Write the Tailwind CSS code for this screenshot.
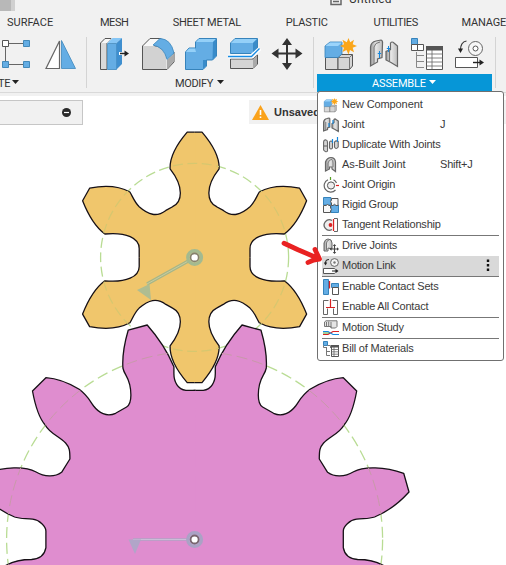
<!DOCTYPE html>
<html lang="en">
<head>
<meta charset="utf-8">
<title>Assemble</title>
<script src="https://cdn.jsdelivr.net/npm/@tailwindcss/browser@4"></script>
</head>
<body class="relative w-[506px] h-[565px] overflow-hidden bg-white font-[Roboto,sans-serif] text-[11px] text-[#333]">

<!-- shared icon symbols -->
<svg class="absolute w-0 h-0" aria-hidden="true">
  <defs>
    <linearGradient id="gr"><stop offset="0" stop-color="#9a9a9a"/><stop offset=".45" stop-color="#e6e6e6"/><stop offset="1" stop-color="#bdbdbd"/></linearGradient>
    <symbol id="i-new" viewBox="324 36 33 36">
      <path d="M325.500 57.500H338V69.500H325.500Z" fill="#d9d9d9" stroke="#555"/>
      <path d="M338 57.500L341 54.500H352.500V66L349.500 69.500H338Z" fill="#d5d5d5" stroke="#555"/>
      <path d="M338 57.500H349.500V69.500M349.500 57.500L352.500 54.500" fill="none" stroke="#777"/>
      <path d="M325 46L330 42H342V54L338 57.500H325Z" fill="#64ade4" stroke="#3683bb" stroke-width=".8"/>
      <path d="M325.500 46L330 42.400H342L338 46Z" fill="#9bd4fb"/>
      <path d="M348.500 38L350.200 42.300L354 39.700L352.700 44.200L357 46L352.700 47.800L354 52.200L350 50L348.500 54.500L346.500 50L342.500 52L344 47.800L340 46L344 44.200L342.500 39.700L346.800 42.300Z" fill="#faa61a"/>
    </symbol>
    <symbol id="i-joint" viewBox="368 37 32 34">
      <path d="M370.500 66V47Q371 42 376 41L381 40Q383 40.500 382.500 44L382 57.500L377.500 59V62Z" fill="url(#gr)" stroke="#666" stroke-width="1.200"/>
      <path d="M374 64V47Q375 42.500 380 42" fill="none" stroke="#777"/>
      <path d="M386 60V51.500L390.500 49.500V43Q392 41 394 43L397.500 46V66.500L391 62.500Z" fill="url(#gr)" stroke="#666" stroke-width="1.200"/>
      <path d="M389.500 50V61" fill="none" stroke="#777"/>
      <path d="M379.500 51V58M388.500 46V52" stroke="#1688dd"/><path d="M377.800 53.500H381.200M386.800 48.500H390.200" stroke="#1688dd"/>
    </symbol>
    <symbol id="i-bom" viewBox="410 37 34 34">
      <path d="M411.500 38.500H417.500V44.500H411.500Z" fill="#64ade4" stroke="#3683bb"/>
      <path d="M411.500 44.500H417.500V50.500H411.500ZM417.500 44.500H423.500V50.500H417.500Z" fill="#fff" stroke="#555"/>
      <path d="M416.500 52V67.500H424M416.500 55.500H424M416.500 61.500H424" fill="none" stroke="#888"/>
      <path d="M426.500 46.500H442.500V69.500H426.500Z" fill="#fff" stroke="#555"/><path d="M426 46H443V50.500H426Z" fill="#555"/>
      <path d="M426 54H443M426 58H443M426 62H443M426 66H443M432 50V69" stroke="#666" stroke-width=".8"/>
    </symbol>
    <symbol id="i-link" viewBox="454 38 32 32">
      <circle cx="475.500" cy="48.500" r="7" fill="#f7f7f7" stroke="#666"/><circle cx="475.500" cy="48.500" r="2.500" fill="#fff" stroke="#555"/>
      <path d="M466.500 41Q460.500 42 460.500 50" fill="none" stroke="#333" stroke-width="1.200"/><path d="M458 48.500H463L460.500 53Z" fill="#222"/>
      <path d="M455.500 57.500H477.500V67.500H455.500Z" fill="#fff" stroke="#555"/><path d="M473 62.500H481" stroke="#222" stroke-width="1.400"/><path d="M479.500 59.500V65.500L484 62.500Z" fill="#222"/>
    </symbol>
    <path id="yq" d="M-1 1V-125.200H7.400C17 -114 25 -100 24.500 -88.500C10 -70 12.500 -55.500 22 -50.700L28.700 -47C38 -40 46 -42.500 55.400 -50.700C60 -55 62 -61 64.700 -65.400C76 -71.500 91 -72 105 -69.200L112 -56.700C107 -44 100 -31 89.700 -23.400C68 -25.500 55.400 -19 55.400 -9V1Z"/>
    <path id="pf" d="M-1 30V-149.200H8.700C17 -150 20.700 -158 20.700 -166V-172.800C28 -190 39 -205 47.400 -214.500L66.400 -209.300C70 -197 72.500 -184 71.700 -171.500C70 -163 63.700 -162 63.700 -144.500C63.700 -137 65.500 -134 68 -132.500L79 -126.200C88 -122 96 -127 101 -133.500C105 -139 107 -144 115.400 -150.200C125 -156 137 -161 148.700 -161.800L162.100 -148.500C160 -137 156 -122 149.400 -114.500C145 -106 135 -103 129 -96.500C125 -92 124.700 -89 124.700 -80.500L133 -67.200C140 -62 150 -62.500 159 -67.800C169 -73.500 190 -73 209.100 -66.200L214.400 -47.500C204 -36 191 -27 180 -22.500C174 -20.500 169 -21.200 162 -20.300C155 -19.500 148.700 -13 148.700 -8.500V8.200C150 16 156 19.500 163 20C173 20 180 21 188 25.500L196 30Z"/>
    <clipPath id="cy"><use href="#yq"/><use href="#yq" transform="scale(-1 1)"/><use href="#yq" transform="scale(1 -1)"/><use href="#yq" transform="scale(-1 -1)"/></clipPath>
    <clipPath id="cp"><use href="#pf"/><use href="#pf" transform="scale(-1 1)"/></clipPath>
  </defs>
</svg>

<!-- modelling canvas -->
<svg class="absolute inset-0" width="506" height="565" viewBox="0 0 506 565">
  <g fill="none" stroke="#b9dc94" stroke-width="1.300">
    <circle cx="194.600" cy="257.400" r="94" stroke-dasharray="10 4.500"/><circle cx="194.600" cy="539.500" r="188" stroke-dasharray="11 5"/>
  </g>
  <g transform="translate(194.600 539.500)">
    <g id="ph">
      <use href="#pf" fill="#df8dcf"/>
      <path fill="none" stroke="#161016" stroke-width="1.300" stroke-linejoin="round" d="M-1 -149.200H8.700C17 -150 20.700 -158 20.700 -166V-172.800C28 -190 39 -205 47.400 -214.500L66.400 -209.300C70 -197 72.500 -184 71.700 -171.500C70 -163 63.700 -162 63.700 -144.500C63.700 -137 65.500 -134 68 -132.500L79 -126.200C88 -122 96 -127 101 -133.500C105 -139 107 -144 115.400 -150.200C125 -156 137 -161 148.700 -161.800L162.100 -148.500C160 -137 156 -122 149.400 -114.500C145 -106 135 -103 129 -96.500C125 -92 124.700 -89 124.700 -80.500L133 -67.200C140 -62 150 -62.500 159 -67.800C169 -73.500 190 -73 209.100 -66.200L214.400 -47.500C204 -36 191 -27 180 -22.500C174 -20.500 169 -21.200 162 -20.300C155 -19.500 148.700 -13 148.700 -8.500V8.200C150 16 156 19.500 163 20C173 20 180 21 188 25.500L196 30"/>
    </g>
    <use href="#ph" transform="scale(-1 1)"/>
    <g clip-path="url(#cp)"><circle r="188" fill="none" stroke="#c799a9" stroke-dasharray="11 5"/></g>
  </g>
  <g transform="translate(194.600 257.400)">
    <g fill="#f0c66c"><use href="#yq"/><use href="#yq" transform="scale(-1 1)"/><use href="#yq" transform="scale(1 -1)"/><use href="#yq" transform="scale(-1 -1)"/></g>
    <path id="ys" fill="none" stroke="#161016" stroke-width="1.300" stroke-linejoin="round" d="M0 -125.200H7.400C17 -114 25 -100 24.500 -88.500C10 -70 12.500 -55.500 22 -50.700L28.700 -47C38 -40 46 -42.500 55.400 -50.700C60 -55 62 -61 64.700 -65.400C76 -71.500 91 -72 105 -69.200L112 -56.700C107 -44 100 -31 89.700 -23.400C68 -25.500 55.400 -19 55.400 -9V0"/>
    <use href="#ys" transform="scale(-1 1)"/><use href="#ys" transform="scale(1 -1)"/><use href="#ys" transform="scale(-1 -1)"/>
    <g clip-path="url(#cy)"><circle r="94" fill="none" stroke="#d6c76f" stroke-width="1.200" stroke-dasharray="10 4.500"/></g>
  </g>
  <!-- joint markers -->
  <path d="M191 259.500L147 284" stroke="#a7b687" stroke-width="3.200"/><path d="M191 259.500L147 284" stroke="#d0d2a4" stroke-width=".8"/>
  <path d="M137 290L149.500 284L151 300Z" fill="#afbd91"/>
  <circle cx="194.600" cy="257.400" r="7" fill="#b7bd8d" stroke="#a3ba90" stroke-width="3"/><circle cx="194.600" cy="257.400" r="4" fill="#fff" stroke="#85816c" stroke-width="1.600"/>
  <path d="M133 539.500H188" stroke="#b1a5c5" stroke-width="2.400"/><path d="M133 539.500H188" stroke="#cec1da" stroke-width=".9"/>
  <path d="M128.500 539.500H141L135 554Z" fill="#b1a5c8"/>
  <circle cx="194.600" cy="539.500" r="7" fill="#b8a7cc" stroke="#aaa2c5" stroke-width="3"/><circle cx="194.600" cy="539.500" r="4" fill="#fff" stroke="#79656f" stroke-width="1.800"/>
</svg>

<div class="relative flex flex-col">
  <!-- document tab strip -->
  <header class="h-[11px] bg-[#f1f1f1] flex">
    <div class="w-[11px] bg-[#b8b8b8]"></div><div class="w-1 bg-[#d0d0d0]"></div>
    <svg class="ml-[314px] shrink-0" width="14" height="11"><path d="M2 -5V4.500H12V-5M4 1.500H10" fill="none" stroke="#666" stroke-width="1.500"/></svg>
    <span class="ml-[6px] -mt-[9px] text-[12px] leading-[16px] tracking-[.2px]">Untitled</span>
  </header>
  <!-- workspace tabs -->
  <nav class="h-[23px] bg-[#f1f1f1] flex pt-px leading-[22px] whitespace-nowrap">
    <span class="ml-[7px] w-[93px]">SURFACE</span><span class="w-[73px] tracking-[-.4px]">MESH</span><span class="w-[113px] tracking-[-.3px]">SHEET METAL</span><span class="w-[88px] tracking-[-.2px]">PLASTIC</span><span class="w-[88px] tracking-[-.4px]">UTILITIES</span><span class="tracking-[-.2px]">MANAGE</span>
  </nav>
  <!-- tool ribbon -->
  <section class="h-[59px] bg-[#f1f1f1] flex border-b border-[#d9d9d9]">
    <div class="w-[86px] flex flex-col">
      <div class="h-10 flex shrink-0">
        <svg width="39" height="40" viewBox="0 34 39 40"><path d="M9 43.500H24M5.500 47V61M9 64.500H24" stroke="#666"/><path d="M2.500 40.500H8.500V46.500H2.500Z" fill="#fff" stroke="#555"/><path d="M23.500 40.500H29.500V46.500H23.500ZM2.500 61.500H8.500V67.500H2.500ZM23.500 61.500H29.500V67.500H23.500Z" fill="#64ade4" stroke="#4389b9"/></svg>
        <svg width="43" height="40" viewBox="39 34 43 40"><path d="M59.500 41V68.500H46Z" fill="#fff" stroke="#666" stroke-width="1.200"/><path d="M61.500 40.500V68.500H75.500Z" fill="#64ade4" stroke="#3e88bd" stroke-width=".8"/></svg>
      </div>
      <div class="flex items-center h-[18px] pt-px leading-[17px]"><span class="-ml-[2px] tracking-[-.3px]">TE</span><svg class="ml-[2px] -mt-[3px]" width="7" height="5"><path d="M0 0H7L3.500 4Z" fill="#222"/></svg></div>
    </div>
    <div class="w-px h-[51px] mt-[3px] bg-[#d4d4d4]"></div>
    <div class="w-[226px] pl-[6px] flex flex-col">
      <div class="h-10 flex shrink-0">
        <svg width="43" height="40" viewBox="93 34 43 40"><path d="M100.500 69.500V43L105 38.500H111L107 43V69.500Z" fill="#d9d9d9" stroke="#555"/><path d="M101.500 43L105.500 39H111L107 43Z" fill="#f8f8f8"/><path d="M107 43V70L112 65V39Z" fill="#fff"/><path d="M107.500 43.500H116.500V69.500H107.500Z" fill="#64ade4" stroke="#3e88bd" stroke-width=".8"/><path d="M107.500 43L112.500 38H122L116.500 43Z" fill="#86c6f5"/><path d="M116.500 43L122 38V64L116.500 69.500Z" fill="#3f8fcf"/><path d="M119 53.500H128" stroke="#fff" stroke-width="3"/><path d="M120 53.500H127" stroke="#222" stroke-width="1.500"/><path d="M124.500 50.500L129 53.500L124.500 56.500Z" fill="#222"/></svg>
        <svg width="43" height="40" viewBox="136 34 43 40"><path d="M142.500 69.500V46L150 38.500H161L154 46Q166 48 167 58L174 52V62L167 69.500Z" fill="#f8f8f8" stroke="#555"/><path d="M143 46H153Q165 47 166.500 60V69H143Z" fill="#d2d2d2"/><path d="M167 60L173.500 54V62L167 69Z" fill="#aaa"/><path d="M153 45L160 38.500Q171 39 174 53L167 59.500Q164 47 153 45Z" fill="#64ade4" stroke="#3e88bd" stroke-width=".8"/></svg>
        <svg width="43" height="40" viewBox="179 34 43 40"><path d="M185.500 52L189 48H195.500V42L199 38.500H216.500V56L212.500 60H206.500V66L203 69.500H185.500Z" fill="#64ade4" stroke="#3683bb"/><path d="M186 52L189 48.500H195L196 52ZM196 42L199 39H216L213 42Z" fill="#94d0f8"/><path d="M213 42L216 39V56L212.500 60ZM203 60H206V66L203 69Z" fill="#398bc9"/></svg>
        <svg width="43" height="40" viewBox="222 34 43 40"><path d="M230.500 43L235 38.500H257.500V49L253 53.500H230.500Z" fill="#64ade4" stroke="#3683bb"/><path d="M231 43L235 39H257L253 43Z" fill="#94d0f8"/><path d="M253 43L257 39V49L253 53Z" fill="#398bc9"/><path d="M230.500 59H253L257.500 55V64L253 68.500H230.500Z" fill="#d5d5d5" stroke="#555"/><path d="M253 59L257 56V64L253 68Z" fill="#aaa"/><path d="M228 56.500H251L260 48.500" fill="none" stroke="#fff" stroke-width="4"/><path d="M228 56.500H251.500L259.500 48.500" fill="none" stroke="#168be3" stroke-width="1.300"/></svg>
        <svg width="43" height="40" viewBox="265 34 43 40"><path d="M275 53.500H299M287 42V65" stroke="#333" stroke-width="2"/><path d="M287 38L292 45H282ZM287 70L292 63H282ZM271.500 53.500L278.500 48.500V58.500ZM302.500 53.500L295.500 48.500V58.500Z" fill="#333"/></svg>
      </div>
      <div class="flex items-center h-[18px] pt-px leading-[17px] pl-[82px]"><span class="tracking-[-.35px]">MODIFY</span><svg class="ml-[4px] -mt-[3px]" width="7" height="5"><path d="M0 0H7L3.500 4Z" fill="#222"/></svg></div>
    </div>
    <div class="w-px h-[51px] mt-[3px] bg-[#d4d4d4]"></div>
    <div class="w-[178px] pl-[3px] flex flex-col">
      <div class="h-10 flex shrink-0">
        <svg width="43" height="40" viewBox="317 34 43 40"><use href="#i-new" x="324" y="36" width="33" height="36"/></svg>
        <svg width="43" height="40" viewBox="360 34 43 40"><use href="#i-joint" x="368" y="37" width="32" height="34"/></svg>
        <svg width="43" height="40" viewBox="403 34 43 40"><use href="#i-bom" x="410" y="37" width="34" height="34"/></svg>
        <svg width="43" height="40" viewBox="446 34 43 40"><use href="#i-link" x="454" y="38" width="32" height="32"/></svg>
      </div>
      <div class="h-[18px] w-[175px] bg-[#0696d7] text-white flex items-center pt-px leading-[17px] pl-[55px]"><span class="tracking-[-.15px]">ASSEMBLE</span><svg class="ml-[3px] -mt-[3px]" width="7" height="5"><path d="M0 0H7L3.500 4Z" fill="#fff"/></svg></div>
    </div>
    <div class="ml-[3px] w-px h-[51px] mt-[3px] bg-[#d4d4d4]"></div>
  </section>
  <!-- browser panel and document status -->
  <section class="flex justify-between border-t-[3px] border-[#f1f1f1] pt-1">
    <div class="w-[83px] h-[25px] bg-[#f1f1f1] border border-l-0 border-[#c6c6c6] flex items-center justify-end pr-[11px]"><svg width="9" height="9"><circle cx="4.500" cy="4.500" r="4.500" fill="#2b2b2b"/><path d="M2 4.500H7" stroke="#fff" stroke-width="1.200"/></svg></div>
    <div class="w-[257px] h-[24px] bg-[#f1f1f1] flex items-center pl-[3px]"><svg width="17" height="15"><path d="M8.500 0L17 15H0Z" fill="#faa21b"/><path d="M8.500 5V10M8.500 11.500V13" stroke="#fff" stroke-width="1.600"/></svg><b class="ml-[5px] font-['Liberation_Sans',sans-serif]">Unsaved:</b></div>
  </section>
</div>

<!-- ASSEMBLE drop-down -->
<div class="absolute left-[317px] top-[91px] w-[187px] h-[270px] bg-white border border-[#707070] rounded-[3px] pt-[3px] pl-1 pr-1 leading-[20px] font-['Liberation_Sans',sans-serif] tracking-[-.2px] text-[#3a3a3a] [&_span]:-mt-[2px]">
  <div class="h-5 pl-px flex items-center"><svg class="w-4 h-4 mr-[3px]"><use href="#i-new" width="16" height="16"/></svg><span class="tracking-[-.1px]">New Component</span></div>
  <div class="h-5 pl-px flex items-center"><svg class="w-4 h-4 mr-[3px]"><path d="M.6 14V5Q1 2 4 1.500L6 1Q7 1 6.800 3V10L4.500 11V12.500Z" fill="url(#gr)" stroke="#666" stroke-width="1.200"/><path d="M2.800 13V5" stroke="#777"/><path d="M9 11V6.500L11 5.500V2.500Q12 1.500 13 2.500L15.300 4V14.500L12 12.500Z" fill="url(#gr)" stroke="#666" stroke-width="1.200"/><path d="M6 6V10M10 3V7" stroke="#1688dd" stroke-width="1.200"/></svg><span class="w-[98px]">Joint</span><span>J</span></div>
  <div class="h-5 pl-px flex items-center"><svg class="w-4 h-4 mr-[3px]"><g fill="#d5d5d5" stroke="#666" stroke-width="1.100"><path d="M.6 13V5Q1 2.500 3 3Q4.500 3 4.500 6V14Q3 16 .6 13ZM6.500 5Q8 3 9.500 5V11Q8 13 6.500 11ZM11.500 5Q13 3 15.200 4.500V10Q13 13 11.500 10Z"/><path d="M.6 9H4.500"/></g><path d="M9.500 2V6M14.500 0V5" stroke="#1688dd" stroke-width="1.200"/></svg><span>Duplicate With Joints</span></div>
  <div class="h-5 pl-px flex items-center"><svg class="w-4 h-4 mr-[3px]"><path d="M2.500 14V5Q4 .7 8 .7Q12 .7 12.500 5V14.500L9 12V10H6.500V12Z" fill="url(#gr)" stroke="#666" stroke-width="1.200"/><path d="M5 12V6Q6 2 9 2.500Q10 3 10 6V10" fill="none" stroke="#777"/></svg><span class="w-[98px] tracking-[-.05px]">As-Built Joint</span><span>Shift+J</span></div>
  <div class="h-5 pl-px flex items-center"><svg class="w-4 h-4 mr-[3px]"><circle cx="8" cy="8.500" r="3.600" fill="#eee" stroke="#555"/><path d="M5 2.700A6.500 6.500 0 1 0 12.500 13M10.500 2.700A6 6 0 0 1 13.500 6" fill="none" stroke="#666" stroke-width="1.200"/><path d="M7.500 0V3" stroke="#55a022" stroke-width="1.200"/><path d="M13 8.500H16" stroke="#e02222" stroke-width="1.200"/></svg><span>Joint Origin</span></div>
  <div class="h-5 pl-px flex items-center"><svg class="w-4 h-4 mr-[3px]"><path d="M.5.500H8V8H.5Z" fill="#64ade4" stroke="#3683bb"/><path d="M8 8H15.500V15.500H8Z" fill="#64ade4" stroke="#3683bb"/><path d="M8.500 1.500H15V8.500H13Q11.500 6 10 8.500H8.500V6Q6.500 5 8.500 3ZM.5 8.500H3Q4.500 6.500 6 8.500H7.500V11Q9.500 12 7.500 14V15.500H.5Z" fill="#f8f8f8" stroke="#555"/></svg><span class="tracking-[-.25px]">Rigid Group</span></div>
  <div class="h-5 pl-px flex items-center"><svg class="w-4 h-4 mr-[3px]"><path d="M9 3.500A5.200 5.200 0 1 0 9 12.500" fill="#eee" stroke="#666" stroke-width="1.300"/><circle cx="7.500" cy="8" r="1.900" fill="#d92222"/><path d="M10.500 2V14" stroke="#d92222" stroke-width="1.300"/><path d="M11 1.500H14.500V14.500H11" fill="none" stroke="#666"/></svg><span>Tangent Relationship</span></div>
  <hr class="h-px border-0 bg-[#777]">
  <div class="h-5 pl-px flex items-center"><svg class="w-4 h-4 mr-[3px]"><path d="M1 13V5Q2 1 5 1Q9 1 9 5V11L5 10V13Z" fill="url(#gr)" stroke="#666"/><path d="M3.500 12V5Q4 2 6 2" fill="none" stroke="#777"/><path d="M7.500 11H15M11.500 7V15" stroke="#444" stroke-width="1.100"/><path d="M11.500 6L13.200 8H9.800ZM11.500 16L13.200 14H9.800ZM6.500 11L8.500 9.300V12.700ZM16 11L14 9.300V12.700Z" fill="#444"/></svg><span>Drive Joints</span></div>
  <div class="h-5 pl-px flex items-center bg-[#d9d9d9]"><svg class="w-4 h-4 mr-[3px]"><circle cx="11.500" cy="4.500" r="3.900" fill="#f4f4f4" stroke="#666"/><circle cx="11.500" cy="4.500" r="1.200" fill="#777"/><path d="M6 1.500Q2.500 1.500 2.500 5" fill="none" stroke="#333" stroke-width="1.100"/><path d="M.8 4.500H4.200L2.500 7.500Z" fill="#222"/><path d="M.5 10.500H11.500V15.500H.5Z" fill="#fff"/><path d="M11.500 11V10.500H.5V15.500H11.500V15" fill="none" stroke="#555"/><path d="M9 13H14" stroke="#222"/><path d="M12.500 10.800V15.200L15.500 13Z" fill="#222"/></svg><span class="tracking-[-.25px]">Motion Link</span><svg class="ml-auto mr-[9px] -mt-[2px]" width="4" height="12"><path d="M.8.500H3.200V2.900H.8ZM.8 5H3.200V7.400H.8ZM.8 9.500H3.200V11.900H.8Z" fill="#111"/></svg></div>
  <hr class="h-px border-0 bg-[#777]">
  <div class="h-5 pl-px flex items-center"><svg class="w-4 h-4 mr-[3px]"><path d="M.5.500H5.500V15.500H.5Z" fill="#64ade4" stroke="#3683bb"/><path d="M6.500 2V9.500" stroke="#d92222" stroke-width="1.300"/><path d="M8.500 4.500H15.500V8.500H8.500Z" fill="#64ade4" stroke="#3683bb"/><path d="M9.500 8.500H15.500V15.500H9.500Z" fill="#fff" stroke="#555"/></svg><span class="tracking-[-.2px]">Enable Contact Sets</span></div>
  <div class="h-5 pl-px flex items-center"><svg class="w-4 h-4 mr-[3px]"><path d="M5.500 1.500H.5V15.500H4.500V9.500M9.500 1.500H14.500V15.500H10.500V9.500" fill="#fff" stroke="#666"/><path d="M7.500 0V8M3 8.500H12" stroke="#d92222" stroke-width="1.200"/></svg><span class="tracking-[-.2px]">Enable All Contact</span></div>
  <hr class="h-px border-0 bg-[#777]">
  <div class="h-5 pl-px flex items-center"><svg class="w-4 h-4 mr-[3px]"><path d="M1.500 6.500V2L3 .8H14V6.500L12.500 8H8V6.500Z" fill="#e5e5e5" stroke="#777"/><path d="M3.500 2V6.500M5.700 1.500V6.500M8 2V8" stroke="#777"/><path d="M0 14.500H5L10 11.500H16" fill="none" stroke="#d92222" stroke-width="1.200"/><path d="M0 11.500H5L10 14.500H16" fill="none" stroke="#168be3" stroke-width="1.200"/><path d="M0 13H6" stroke="#41a33b"/></svg><span class="tracking-[-.2px]">Motion Study</span></div>
  <hr class="h-px border-0 bg-[#777]">
  <div class="h-5 pl-px flex items-center"><svg class="w-4 h-4 mr-[3px]"><path d="M.5.500H4.500V4.500H.5Z" fill="#64ade4" stroke="#3683bb"/><path d="M4.500 4.500H7.500V7M.5 4.500V6.500H4M3.500 6.500V14.500H7M3.500 10.500H7" fill="none" stroke="#777"/><path d="M8.500 4.500H15.500V15.500H8.500Z" fill="#fff" stroke="#555"/><path d="M8 4H16V6.500H8Z" fill="#555"/><path d="M8 8.500H16M8 10.800H16M8 13.200H16M11 6V15" stroke="#666" stroke-width=".8"/></svg><span class="tracking-[-.18px]">Bill of Materials</span></div>
</div>

<!-- hand-drawn pointer -->
<svg class="absolute left-[275px] top-[235px]" width="50" height="40" viewBox="275 235 50 40"><path d="M284 243.300L298 249.700L318.500 258.500M315 249.500L319.500 259Q313 259.500 308 262.500" fill="none" stroke="#e92222" stroke-width="4.800" stroke-linecap="round" stroke-linejoin="round"/></svg>
</body>
</html>
